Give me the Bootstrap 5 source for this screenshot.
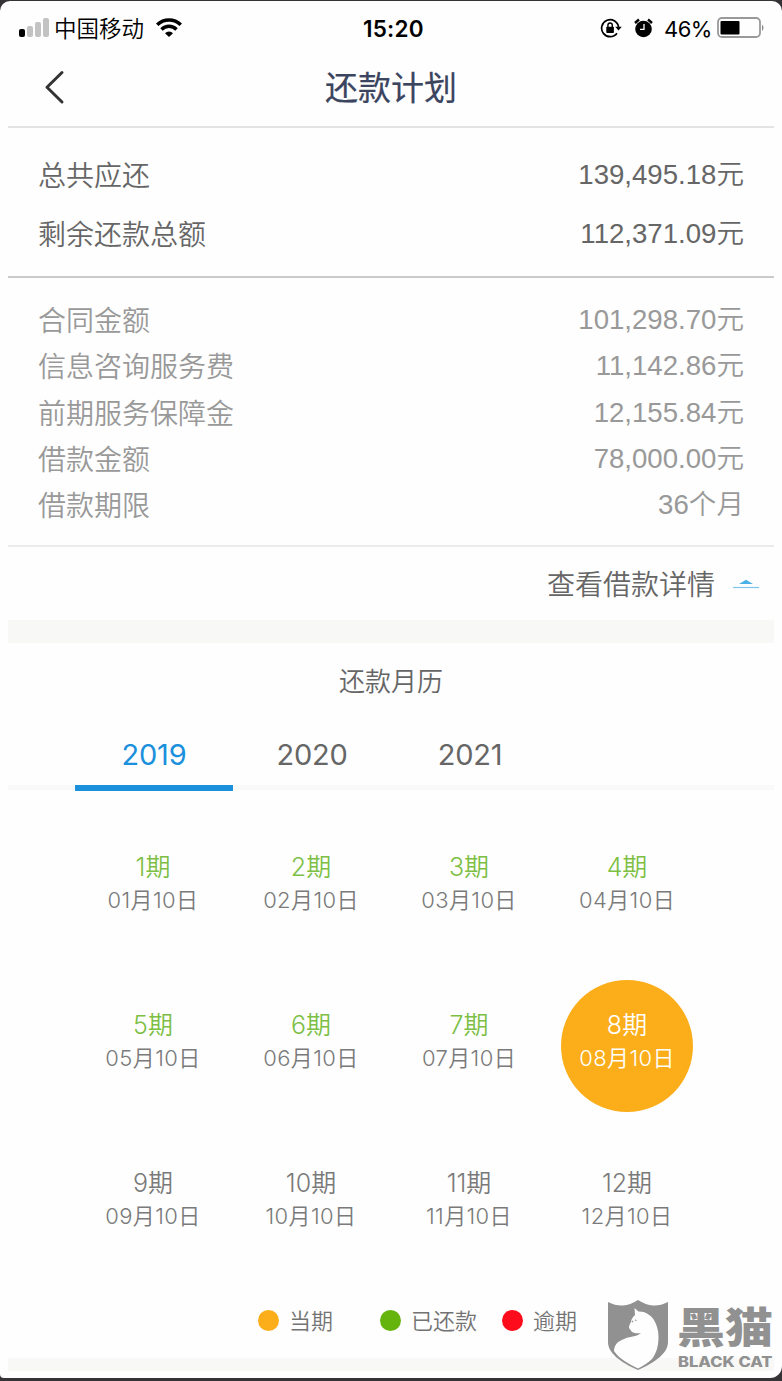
<!DOCTYPE html>
<html lang="zh-CN">
<head>
<meta charset="utf-8">
<meta name="viewport" content="width=device-width, initial-scale=1">
<title>还款计划</title>
<link href="https://cdn.jsdelivr.net/npm/bootstrap@5.3.0/dist/css/bootstrap.min.css" rel="stylesheet">
<style>
  body { background: #353335; font-family: "Liberation Sans", "Noto Sans CJK SC", sans-serif; color: #666; }
  .screen { height: 1377px; margin-top: 1px; background: #fefefe; border-radius: 10px 10px 12px 4px; overflow: hidden; padding: 0 8px; }
  .status { height: 54px; padding: 0 9px 0 11px; color: #000; font: 22.5px/54px Inter, "Noto Sans CJK SC", sans-serif; }
  .status .carrier { font-size: 22.5px; margin-left: 5px; padding-top: 2px; font-weight: 350; }
  .clock { font-weight: 600; font-size: 22.5px; letter-spacing: .2px; left: 355px; top: 1px; }
  .titlebar { height: 73px; border-bottom: 2px solid #e4e4e4; }
  .titlebar h1 { font: 400 33px/63px "Noto Sans CJK SC", sans-serif; color: #3b4560; -webkit-text-stroke: .2px #3b4560; }
  .back { left: 34px; top: 14px; }
  .line-row { font-size: 28px; padding: 0 30px; }
  .line-row dt { font-weight: 350; padding-top: 2px; }
  .line-row dd { font-size: 27.6px; font-weight: 350; }
  .totals { height: 150px; padding-top: 18px; border-bottom: 2px solid #cacaca; }
  .totals .line-row { height: 58.5px; line-height: 57px; }
  .terms { height: 269px; padding-top: 19px; border-bottom: 2px solid #ebebeb; color: #999; }
  .terms .line-row { height: 46.3px; line-height: 46.3px; }
  .more { height: 73px; font-size: 28px; font-weight: 350; padding: 4px 15px 0 0; }
  .band { background: #f8f8f7; margin: 0; }
  .cal { font-family: Inter, "Noto Sans CJK SC", sans-serif; }
  .cal h2 { font: 350 26px/73px "Noto Sans CJK SC", sans-serif; height: 74px; }
  .years { height: 74px; padding-left: 67px; background: linear-gradient(#f9f9f9, #f9f9f9) 0 68px / 100% 5px no-repeat; }
  .years .nav-link { width: 158px; height: 74px; padding: 0; border-radius: 0; text-align: center; font-size: 29px; line-height: 75px; color: #666; letter-spacing: -.2px; }
  .years .nav-link.active { color: #1b90dc; border-bottom: 6px solid #1b90dc; }
  .periods { width: 632px; margin: 18px 0 0 66px; display: grid; grid-template-columns: repeat(4, 158px); grid-auto-rows: 158px; }
  .period { width: 132px; height: 132px; border-radius: 50%; padding-top: 28px; text-align: center; margin: auto; color: #7a7a7a; font-weight: 360; white-space: nowrap; }
  .period b { display: block; font-size: 25px; line-height: 34px; font-weight: 360; }
  .period span { display: block; font-size: 22px; line-height: 33px; letter-spacing: .4px; }
  .period.paid b { color: #7dbf45; }
  .period.now { background: #fcae1a; color: #fff; }
  .legend { height: 75px; padding-left: 250px; font-size: 22px; font-weight: 350; color: #737373; }
  .legend span { padding-top: 2px; }
  .legend i { width: 21px; height: 21px; border-radius: 50%; margin-right: 10px; }
  .brand { left: 607px; top: 1299px; color: #919191; }
  .brand .zh { font: 900 48px/40px "Noto Sans CJK SC", sans-serif; left: 70px; top: 6px; height: 40px; white-space: nowrap; transform: scaleY(.88); transform-origin: 0 50%; }
  .brand .en { font: 800 14px/14px Inter, sans-serif; left: 71px; top: 56px; white-space: nowrap; transform: scaleX(1.18); transform-origin: 0 0; }
</style>
</head>
<body>
<main class="screen">
  <header>
    <div class="status d-flex align-items-center position-relative">
      <svg width="30" height="20" viewBox="0 0 30 20"><rect x="0" y="11" width="6" height="8" rx="2"/><g fill="#c3c3c3"><rect x="8" y="8" width="6" height="11" rx="2"/><rect x="16" y="4" width="6" height="15" rx="2"/><rect x="24" y="0" width="6" height="19" rx="2"/></g></svg>
      <span class="carrier">中国移动</span>
      <svg width="26" height="20" viewBox="0 0 26 20" style="margin-left:12px"><g fill="none" stroke="#000" stroke-width="3.5"><path d="M1.2 6.8a17 17 0 0 1 23.6 0"/><path d="M5.5 11.4a10.7 10.7 0 0 1 15 0"/></g><path d="M9 15.2a5.8 5.8 0 0 1 8 0L13 19z"/></svg>
      <span class="clock position-absolute">15:20</span>
      <svg class="ms-auto" width="22" height="20" viewBox="0 0 22 20"><path d="M17 15.2A8.5 8.5 0 1 1 18.6 9.5" fill="none" stroke="#000" stroke-width="1.7"/><path d="M15.2 8.800h6.600L18.5 12.600z"/><rect x="6.3" y="8.8" width="7.6" height="6.2" rx=".8"/><path d="M7.900 9.400V7.200a2.200 2.200 0 0 1 4.400 0v2.200" fill="none" stroke="#000" stroke-width="1.4"/></svg>
      <svg width="19" height="20" viewBox="0 0 19 20" style="margin-left:12px"><circle cx="9.5" cy="11" r="8.3"/><path d="M1 5 5 1.5M18 5l-4-3.500" stroke="#000" stroke-width="2.4"/><path d="M10 6V11.300H6" fill="none" stroke="#fff" stroke-width="1.3"/></svg>
      <span style="margin-left:11px;width:47px;font-size:22px;letter-spacing:-.5px;padding-top:1px">46%</span>
      <svg width="48" height="22" viewBox="0 0 48 22" style="margin-left:6px"><rect x="1" y="1" width="42" height="19" rx="4" fill="none" stroke="#999" stroke-width="1.8"/><rect x="3.5" y="4" width="19" height="13.5" rx="1"/><path d="M45 7.500q3 3 0 6.500z" fill="#888"/></svg>
    </div>
    <div class="titlebar position-relative text-center">
      <svg class="back position-absolute" width="24" height="36" viewBox="0 0 24 36"><path d="M20 3.500 5 18.300 20 33" fill="none" stroke="#333" stroke-width="3" stroke-linecap="round" stroke-linejoin="round"/></svg>
      <h1 class="m-0">还款计划</h1>
    </div>
  </header>
  <dl class="totals m-0" id="totals"></dl>
  <dl class="terms m-0" id="terms"></dl>
  <div class="more d-flex align-items-center justify-content-end">查看借款详情
    <svg width="26" height="10" viewBox="0 0 26 10" style="margin-left:18px;margin-top:-4px"><path d="M6 5 13 .8 20 5z" fill="#4ab1e8"/><path d="M0 8.500h26" stroke="#7cc5ec" stroke-width="1.2"/></svg>
  </div>
  <div class="band" style="height:23px"></div>
  <section class="cal">
    <h2 class="m-0 text-center">还款月历</h2>
    <nav class="nav years"><a class="nav-link active" href="#">2019</a><a class="nav-link" href="#">2020</a><a class="nav-link" href="#">2021</a></nav>
    <div class="periods" id="periods"></div>
  </section>
  <div class="legend d-flex align-items-center">
    <i style="background:#fcae1a"></i><span style="width:91px">当期</span>
    <i style="background:#65b40e"></i><span style="width:91px">已还款</span>
    <i style="background:#fd0d1b"></i><span>逾期</span>
  </div>
  <div class="band" style="height:13px"></div>
</main>
<div class="brand position-absolute">
  <svg width="62" height="72" viewBox="0 0 62 72"><path fill="#919191" d="M1 3q8 4 15 3.500T31 1q8 5 15 5.500T61 3v40c0 11-12 20-30 28C13 63 1 54 1 43z"/><path fill="#fefefe" d="M27.500 9l4 3.500C37 12 43 15 47 21c3 5 4.500 11 4.500 17 0 9-2 16-6.500 22-4 4-9 7-14 9.500C22 65 12 60 7 52c0-4 2-8 6-10 6-4 13-4 18-6l3-2c-3 .5-6 .5-9-1l-3-4c0-3 1-4 2-6 0-3 2-5 4-7z"/><path d="m25 22 1 1m2-2 1.500 .5" stroke="#919191" stroke-width="1.300"/></svg>
  <span class="zh position-absolute">黑猫</span>
  <span class="en position-absolute">BLACK CAT</span>
</div>
<script src="https://cdn.jsdelivr.net/npm/bootstrap@5.3.0/dist/js/bootstrap.bundle.min.js"></script>
<script>
  const row = ([k, v]) => `<div class="line-row d-flex justify-content-between"><dt>${k}</dt><dd class="m-0">${v}</dd></div>`;
  document.getElementById('totals').innerHTML = [['总共应还', '139,495.18元'], ['剩余还款总额', '112,371.09元']].map(row).join('');
  document.getElementById('terms').innerHTML = [['合同金额', '101,298.70元'], ['信息咨询服务费', '11,142.86元'], ['前期服务保障金', '12,155.84元'], ['借款金额', '78,000.00元'], ['借款期限', '36个月']].map(row).join('');
  document.getElementById('periods').innerHTML = Array.from({length: 12}, (_, i) => {
    const n = i + 1, state = n < 8 ? 'paid' : n === 8 ? 'now' : '';
    return `<div class="period ${state}"><b>${n}期</b><span>${String(n).padStart(2, '0')}月10日</span></div>`;
  }).join('');
</script>
</body>
</html>
